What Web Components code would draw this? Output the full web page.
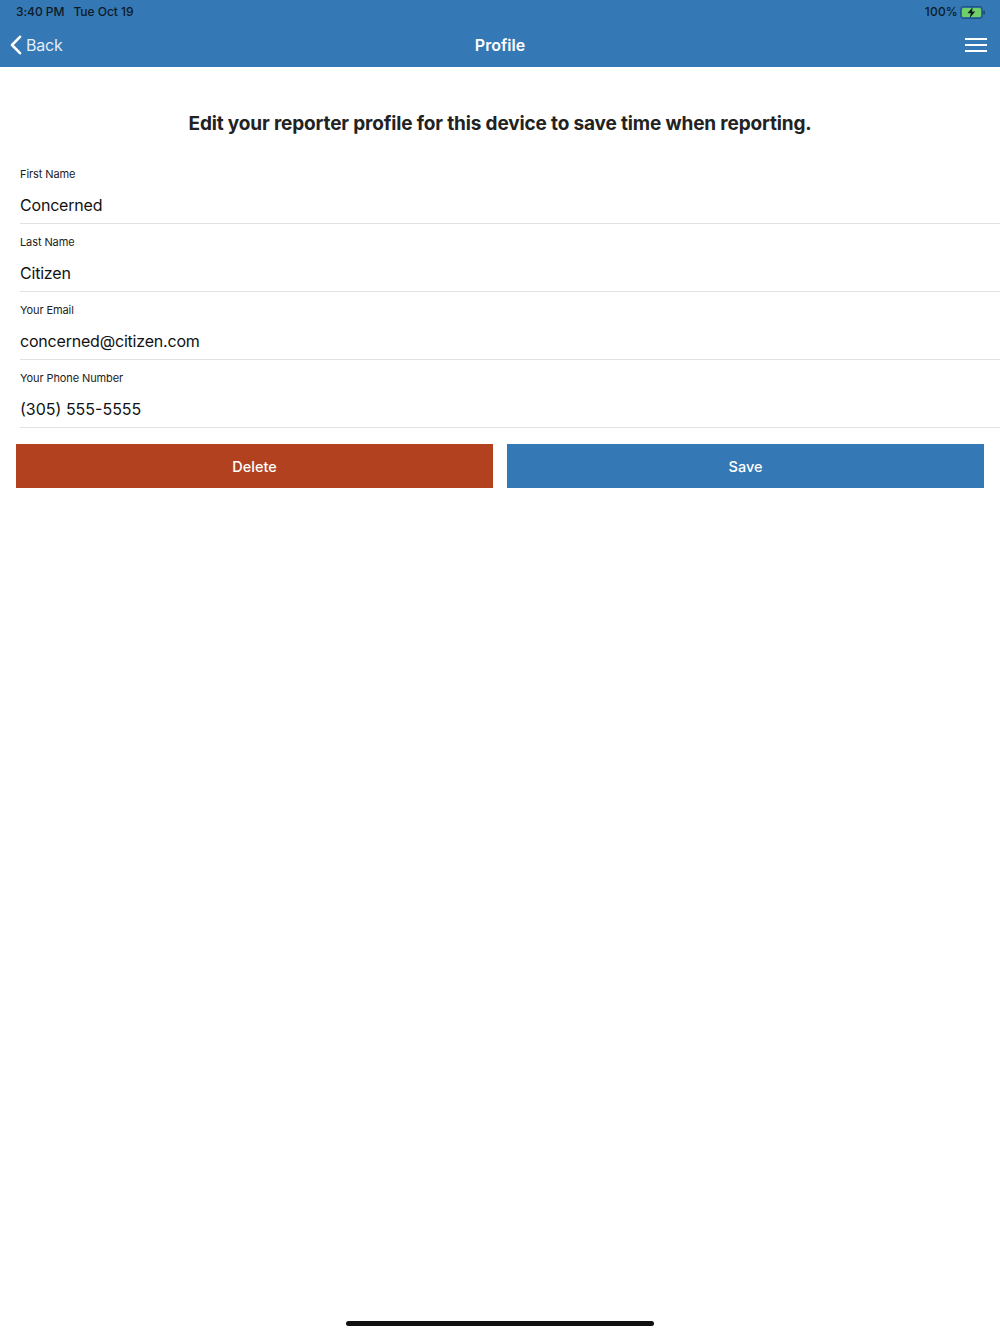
<!DOCTYPE html>
<html><head><meta charset="utf-8"><style>
html,body{margin:0;padding:0;background:#fff}
body{font-family:Inter,"Liberation Sans",sans-serif;height:1334px;overflow:hidden}
</style></head><body>
<app-header title="Profile"></app-header>
<profile-page></profile-page>
<home-bar></home-bar>
<script>
class AppHeader extends HTMLElement{constructor(){super();this.attachShadow({mode:'open'}).innerHTML=`<style>
:host{display:block;background:#3478b5;color:#fff;height:67px;box-sizing:border-box}
.status{height:24px;display:flex;align-items:center;justify-content:space-between;padding:0 15px 0 16px;font-size:12px;color:#0d1a26;line-height:24px;font-weight:500}
.status .l{display:flex;gap:9px;letter-spacing:-.03px}
.status .r{display:flex;align-items:center;gap:2px}
.nav{height:43px;display:grid;grid-template-columns:1fr auto 1fr;align-items:center;padding:0 13px}
.back{display:flex;align-items:center;gap:4px;font-size:16px;letter-spacing:-.2px;color:#e3edf6;margin:-2px 0 0 -3px}
.title{font-size:16px;font-weight:600;margin-top:-1px;letter-spacing:.02px}
.menu{justify-self:end;display:block;margin-top:-1px}
</style>
<div class="status"><div class="l"><span>3:40 PM</span><span>Tue Oct 19</span></div>
<div class="r"><span style="letter-spacing:.2px">100%</span><svg width="25" height="13" viewBox="0 0 25 13"><rect x=".5" y=".5" width="22" height="12" rx="3" fill="#2d6aa0" stroke="#1f5688"/><rect x="2" y="2" width="19" height="9" rx="1.5" fill="#6fd06a"/><rect x="23.5" y="4.5" width="1.2" height="4" rx=".6" fill="#1a3a58"/><path d="M12.8 1 7.5 7.3h3.3L9.7 12l5.5-6.4h-3.3z" fill="#0d1a26"/></svg></div></div>
<div class="nav"><div class="back"><svg width="12" height="20" viewBox="0 0 12 20"><path d="M10 1.8 2 10l8 8.2" fill="none" stroke="#fff" stroke-width="2.6" stroke-linecap="round" stroke-linejoin="round"/></svg><span>Back</span></div>
<div class="title">${this.getAttribute('title')}</div>
<svg class="menu" width="22" height="14" viewBox="0 0 22 14"><path d="M0 1h22M0 7h22M0 13h22" stroke="#fff" stroke-width="2"/></svg></div>`}}
customElements.define('app-header',AppHeader);
class FormField extends HTMLElement{constructor(){super();this.attachShadow({mode:'open'}).innerHTML=`<style>
:host{display:block;height:68px;box-sizing:border-box;margin-left:20px;padding-top:10px;border-bottom:1px solid #e2e2e2;color:#111}
.lab{font-size:11px;line-height:16px;color:#222;letter-spacing:-.1px}
.val{font-size:16px;line-height:22px;margin-top:12px;letter-spacing:var(--ls,-.2px)}
</style><div class="lab">${this.getAttribute('label')}</div><div class="val">${this.getAttribute('value')}</div>`}}
customElements.define('form-field',FormField);
class ActionButton extends HTMLElement{constructor(){super();this.attachShadow({mode:'open'}).innerHTML=`<style>
:host{display:flex;flex:1;height:44px;align-items:center;justify-content:center;color:#fff;font-size:14.5px;font-weight:500;background:var(--bg)}
</style><slot></slot>`}}
customElements.define('action-button',ActionButton);
class ProfilePage extends HTMLElement{constructor(){super();this.attachShadow({mode:'open'}).innerHTML=`<style>
:host{display:block}
h1{margin:0;padding:45px 0 20px;font-size:19px;line-height:24px;font-weight:700;text-align:center;color:#222;letter-spacing:-.15px}
.btns{display:flex;gap:14px;padding:16px 16px 0}
</style><h1>Edit your reporter profile for this device to save time when reporting.</h1>
<div>
<form-field label="First Name" value="Concerned"></form-field>
<form-field label="Last Name" value="Citizen"></form-field>
<form-field label="Your Email" value="concerned@citizen.com"></form-field>
<form-field style="--ls:0" label="Your Phone Number" value="(305) 555-5555"></form-field></div>
<div class="btns"><action-button style="--bg:#b24120">Delete</action-button><action-button style="--bg:#3478b5">Save</action-button></div>`}}
customElements.define('profile-page',ProfilePage);
class HomeBar extends HTMLElement{constructor(){super();this.attachShadow({mode:'open'}).innerHTML=`<style>
:host{position:absolute;left:346px;top:1321px;width:308px;height:5px;border-radius:3px;background:#111}
</style>`}}
customElements.define('home-bar',HomeBar);
</script></body></html>
